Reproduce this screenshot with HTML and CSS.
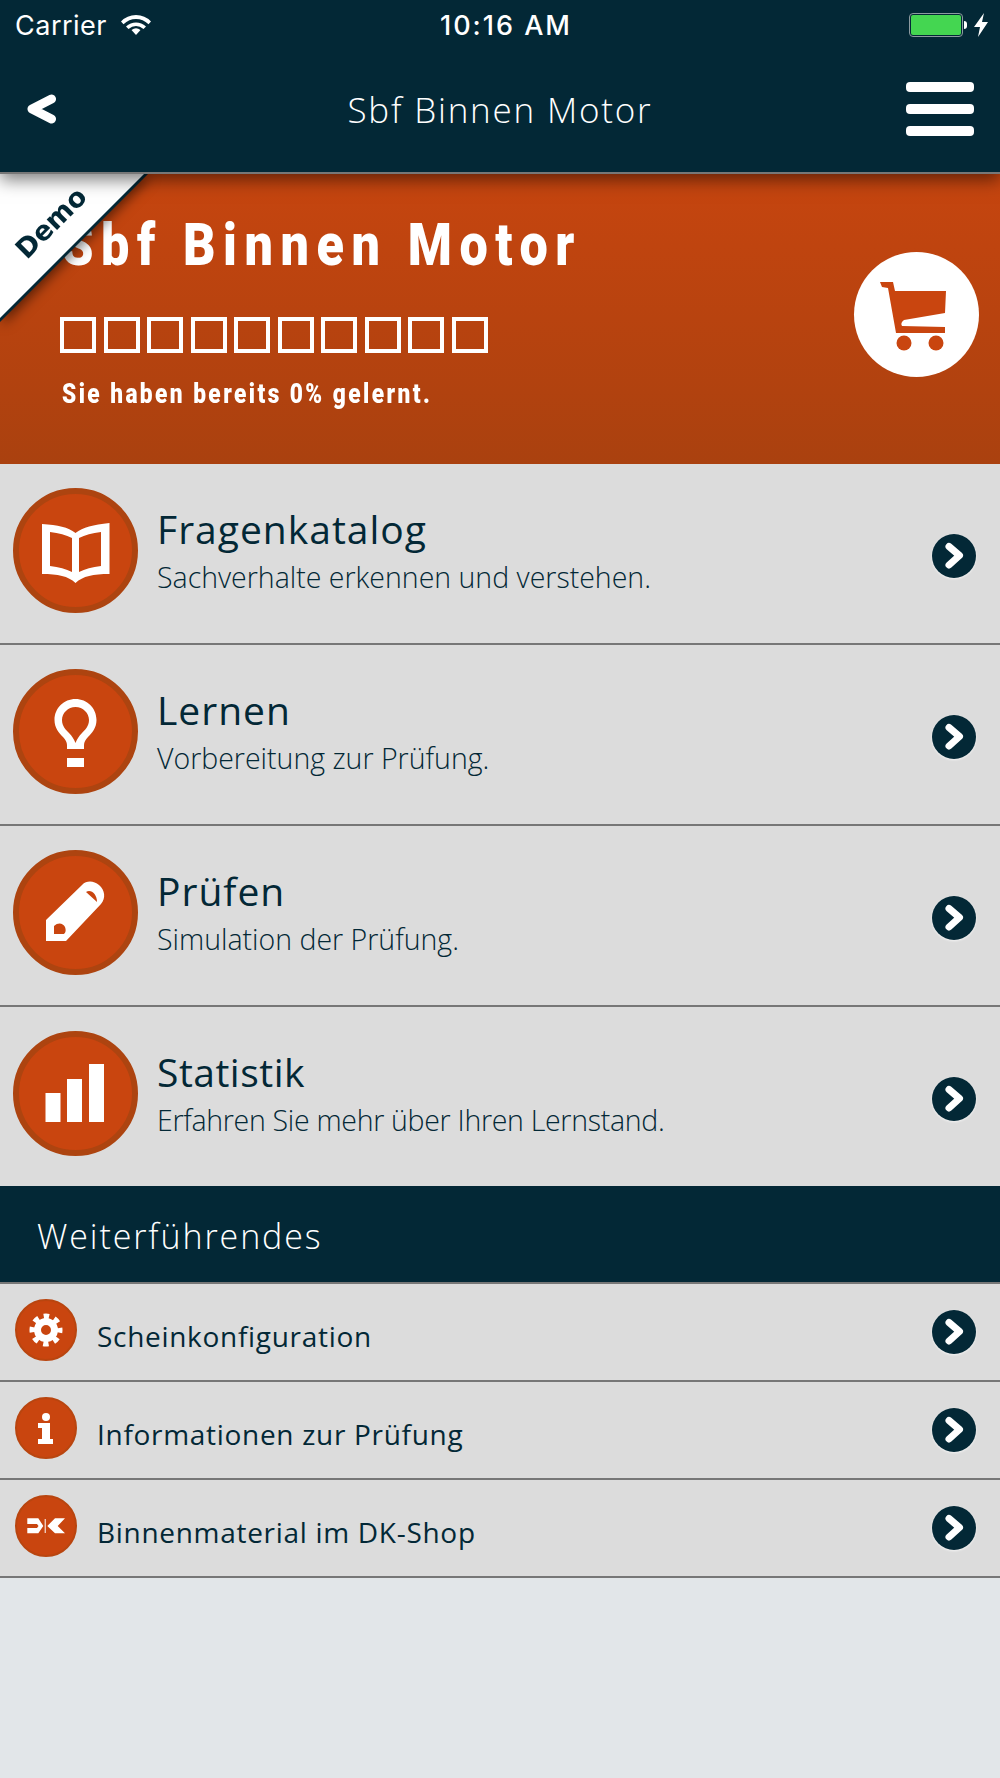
FILE: index.html
```html
<!DOCTYPE html>
<html lang="de">
<head>
  <meta charset="UTF-8" />
  <meta name="viewport" content="width=device-width, initial-scale=1.0" />
  <title>Sbf Binnen Motor</title>
  <link rel="stylesheet" href="styles.css">
</head>
<body>
  <header class="topbar">
    <div class="status">
      <div class="status-left">
        <span class="carrier">Carrier</span>
        <svg class="wifi" viewBox="0 0 30 22"><path d="M15 21 L10.500 16 Q15 12.500 19.500 16 Z"/><path d="M15 1 Q24 1 30 7.500 L27.500 10.200 Q22 5 15 5 Q8 5 2.500 10.200 L0 7.500 Q6 1 15 1 Z"/><path d="M15 8.500 Q20.500 8.500 25 12.500 L22.500 15 Q19 12 15 12 Q11 12 7.500 15 L5 12.500 Q9.500 8.500 15 8.500 Z"/></svg>
      </div>
      <span class="clock">10:16 AM</span>
      <div class="status-right">
        <span class="battery"><span class="battery-fill"></span></span>
        <span class="battery-tip"></span>
        <svg class="bolt" viewBox="0 0 14 24"><path d="M10 0 L0 14 H6 L4 24 L14 9 H8 Z"/></svg>
      </div>
    </div>
    <div class="navbar">
      <svg class="back" viewBox="0 0 32 32"><path d="M25.500 6 L6 16 L25.500 26" /></svg>
      <span class="nav-title">Sbf Binnen Motor</span>
      <div class="burger"><span></span><span></span><span></span></div>
    </div>
  </header>

  <section class="hero">
    <div class="ribbon"><div class="ribbon-edge"></div><span class="ribbon-text">Demo</span></div>
    <div class="hero-text">
      <h1>Sbf Binnen Motor</h1>
      <div class="stars">
        <span></span><span></span><span></span><span></span><span></span>
        <span></span><span></span><span></span><span></span><span></span>
      </div>
      <p>Sie haben bereits 0% gelernt.</p>
    </div>
    <div class="cart">
      <svg viewBox="0 0 125 125">
        <path d="M26 30 H39 L41 39 H92 L91 61 L50 68 Q46 71 48 74 L91 75 V81 H42 L34 36 L28 35 Z"/>
        <circle cx="50" cy="91" r="7.500"/>
        <circle cx="82" cy="91" r="7.500"/>
      </svg>
    </div>
  </section>

  <ul class="menu">
    <li class="menu-row">
      <div class="round">
        <svg viewBox="0 0 125 125"><path fill-rule="evenodd" d="M29 36 C45 37 55 39 62.500 45 C70 39 80 37 96.500 35 V86 C80 86 70 88 62.500 95 C55 88 45 86 29 86 Z M37 44 V78 C46 79 53 81 59 84 V50 C53 47 46 45 37 44 Z M88 44 C79 45 72 47 66 50 V84 C72 81 79 79 88 78 Z"/></svg>
      </div>
      <div class="menu-text">
        <h2>Fragenkatalog</h2>
        <p>Sachverhalte erkennen und verstehen.</p>
      </div>
      <svg class="go" viewBox="0 0 44 44"><circle cx="22" cy="22" r="22"/><path d="M17 12.500 L27.500 21.500 L17 31"/></svg>
    </li>
    <li class="menu-row">
      <div class="round">
        <svg viewBox="0 0 125 125"><path fill-rule="evenodd" d="M62.500 30 C50.900 30 41.500 39 41.500 51 C41.500 59 46 64 50 68 C52.500 71 54 73 54 76 V80 H71 V76 C71 73 72.500 71 75 68 C79 64 83.500 59 83.500 51 C83.500 39 74 30 62.500 30 Z M62.500 38 C55 38 49 44 49 51 C49 57 53 61 56 64 C59 67 61 70 62.500 74 C64 70 66 67 69 64 C72 61 76 57 76 51 C76 44 70 38 62.500 38 Z"/><rect x="54" y="89" width="17" height="9"/></svg>
      </div>
      <div class="menu-text">
        <h2>Lernen</h2>
        <p>Vorbereitung zur Prüfung.</p>
      </div>
      <svg class="go" viewBox="0 0 44 44"><circle cx="22" cy="22" r="22"/><path d="M17 12.500 L27.500 21.500 L17 31"/></svg>
    </li>
    <li class="menu-row">
      <div class="round">
        <svg viewBox="0 0 125 125"><path fill-rule="evenodd" d="M33 91 V70 L69 35 C74 30 81 31 86 35 C92 40 93 48 88 54 L53 91 Z M41 76 C45 72 50 73 52 77 C53 80 53 82 51 84 H41 Z M73 42 C78 39 84 44 84 52 Z"/></svg>
      </div>
      <div class="menu-text">
        <h2>Prüfen</h2>
        <p>Simulation der Prüfung.</p>
      </div>
      <svg class="go" viewBox="0 0 44 44"><circle cx="22" cy="22" r="22"/><path d="M17 12.500 L27.500 21.500 L17 31"/></svg>
    </li>
    <li class="menu-row tight">
      <div class="round">
        <svg viewBox="0 0 125 125"><rect x="32.500" y="62" width="15" height="29"/><rect x="54" y="48" width="15" height="43"/><rect x="76" y="33" width="15" height="58"/></svg>
      </div>
      <div class="menu-text">
        <h2>Statistik</h2>
        <p>Erfahren Sie mehr über Ihren Lernstand.</p>
      </div>
      <svg class="go" viewBox="0 0 44 44"><circle cx="22" cy="22" r="22"/><path d="M17 12.500 L27.500 21.500 L17 31"/></svg>
    </li>
  </ul>

  <h3 class="section-head">Weiterführendes</h3>

  <ul class="submenu">
    <li class="sub-row">
      <div class="round small">
        <svg viewBox="0 0 62 62"><circle class="gear-teeth" cx="31" cy="31" r="13.500"/><circle class="gear-ring" cx="31" cy="31" r="8.500"/></svg>
      </div>
      <span class="sub-label">Scheinkonfiguration</span>
      <svg class="go" viewBox="0 0 44 44"><circle cx="22" cy="22" r="22"/><path d="M17 12.500 L27.500 21.500 L17 31"/></svg>
    </li>
    <li class="sub-row">
      <div class="round small">
        <svg viewBox="0 0 62 62"><circle cx="31" cy="20" r="4"/><rect x="23" y="26" width="12" height="5"/><rect x="27" y="26" width="8" height="21"/><rect x="23" y="42" width="15" height="5"/></svg>
      </div>
      <span class="sub-label">Informationen zur Prüfung</span>
      <svg class="go" viewBox="0 0 44 44"><circle cx="22" cy="22" r="22"/><path d="M17 12.500 L27.500 21.500 L17 31"/></svg>
    </li>
    <li class="sub-row">
      <div class="round small">
        <svg viewBox="0 0 62 62"><path d="M12.300 23.300 H23.300 L28.300 31 L23.300 38.300 H12.300 V33 H22 L23.500 31 L22 29 H12.300 Z"/><rect x="29.700" y="24" width="1" height="14"/><path d="M32.300 31 L40 23.300 H50 L42.700 31 L50 38.300 H40 Z"/></svg>
      </div>
      <span class="sub-label">Binnenmaterial im DK-Shop</span>
      <svg class="go" viewBox="0 0 44 44"><circle cx="22" cy="22" r="22"/><path d="M17 12.500 L27.500 21.500 L17 31"/></svg>
    </li>
  </ul>
</body>
</html>
```

FILE: styles.css
```css
* {
  box-sizing: border-box;
}
body {
  margin: 0;
  min-height: 1778px;
  background: #e2e6e9;
  color: #032836;
  font-family: 'Open Sans', sans-serif;
}
ul {
  list-style: none;
  margin: 0;
  padding: 0;
}

/* top bar */
.topbar {
  position: relative;
  z-index: 3;
  height: 174px;
  background: #032836;
  border-bottom: 2px solid #777;
  box-shadow: 0 6px 16px rgba(0, 0, 0, 0.5);
  color: #fff;
}
.status {
  display: flex;
  align-items: center;
  justify-content: space-between;
  height: 50px;
  padding: 0 12px 0 15px;
  font-size: 27px;
  font-family: 'Inter', sans-serif;
}
.status-left, .status-right {
  display: flex;
  align-items: center;
  width: 170px;
}
.status-right {
  justify-content: flex-end;
}
.carrier {
  font-weight: 400;
  letter-spacing: 0.5px;
}
.wifi {
  width: 30px;
  height: 22px;
  margin-left: 14px;
  fill: #fff;
}
.clock {
  font-weight: 500;
  letter-spacing: 2px;
  margin-left: 9px;
}
.battery {
  width: 54px;
  height: 24px;
  border: 1px solid #8d9aa0;
  border-radius: 4px;
  padding: 1px;
}
.battery-fill {
  display: block;
  height: 100%;
  background: #44d651;
  border-radius: 2px;
}
.battery-tip {
  width: 3px;
  height: 8px;
  margin-left: 1px;
  background: #fff;
  border-radius: 0 3px 3px 0;
}
.bolt {
  width: 14px;
  height: 24px;
  margin-left: 7px;
  fill: #fff;
}
.navbar {
  display: flex;
  align-items: center;
  justify-content: space-between;
  height: 122px;
  padding: 0 26px 4px 26px;
}
.back {
  width: 32px;
  height: 32px;
  fill: none;
  stroke: #fff;
  stroke-width: 9;
  stroke-linecap: round;
  stroke-linejoin: round;
}
.nav-title {
  margin-left: 36px;
  font-size: 35px;
  font-weight: 300;
  letter-spacing: 1.800px;
}
.burger {
  display: flex;
  flex-direction: column;
  gap: 12px;
  width: 68px;
}
.burger span {
  height: 10px;
  background: #fff;
  border-radius: 4px;
}

/* hero */
.hero {
  position: relative;
  display: flex;
  align-items: flex-start;
  justify-content: space-between;
  height: 290px;
  padding: 41px 21px 0 60px;
  background: linear-gradient(#c6450f, #aa410f);
  color: #fff;
  overflow: hidden;
}
.ribbon {
  position: absolute;
  z-index: 2;
  left: 0;
  top: 0;
  width: 148px;
  height: 148px;
  filter: drop-shadow(3px 3px 6px rgba(0, 0, 0, 0.5));
}
.ribbon-edge {
  position: absolute;
  inset: 0;
  background: #032836;
  clip-path: polygon(0 0, 100% 0, 0 100%);
}
.ribbon-edge::after {
  content: "";
  position: absolute;
  left: 0;
  top: 0;
  width: 144px;
  height: 144px;
  background: #fff;
  clip-path: polygon(0 0, 100% 0, 0 100%);
}
.ribbon-text {
  position: absolute;
  left: 8px;
  top: 37px;
  width: 82px;
  text-align: center;
  font-family: 'DejaVu Sans', sans-serif;
  font-weight: 700;
  font-size: 27px;
  line-height: 1;
  color: #032836;
  transform: rotate(-45deg);
}
/* the headline font is a narrow square cut, Roboto squeezed comes closest */
.hero h1 {
  margin: 0 0 0 2px;
  font-family: 'Roboto', sans-serif;
  font-size: 60px;
  font-weight: 900;
  line-height: 60px;
  letter-spacing: 9px;
  white-space: nowrap;
  transform: scaleX(0.84);
  transform-origin: left;
}
.stars {
  display: flex;
  gap: 7.500px;
  margin-top: 42px;
}
.stars span {
  width: 36px;
  height: 36px;
  border: 4px solid #fff;
}
.hero p {
  margin: 24px 0 0 2px;
  font-family: 'Roboto', sans-serif;
  font-size: 28px;
  font-weight: 900;
  letter-spacing: 3px;
  white-space: nowrap;
  transform: scaleX(0.81);
  transform-origin: left;
}
.cart {
  width: 125px;
  height: 125px;
  margin-top: 37px;
  background: #fff;
  border-radius: 50%;
}
.cart svg {
  display: block;
  fill: #c9450f;
}

/* big rows */
.menu-row {
  display: flex;
  align-items: center;
  height: 181px;
  padding: 0 24px 0 13px;
  background: #dcdcdc;
  border-bottom: 2px solid #777;
}
.menu-row:last-child {
  border-bottom: none;
  height: 179px;
}
.round {
  flex: none;
  width: 125px;
  height: 125px;
  margin-top: -6px;
  background: #c9450f;
  border: 6px solid #ad4410;
  border-radius: 50%;
  position: relative;
}
.round svg {
  display: block;
  position: absolute;
  left: -6px;
  top: -6px;
  width: 125px;
  height: 125px;
  fill: #fff;
}
.menu-text {
  flex: 1;
  margin-left: 19px;
  margin-top: -7px;
}
.menu-text h2 {
  margin: 0;
  font-size: 39px;
  font-weight: 400;
  line-height: 46px;
  letter-spacing: 1px;
}
.menu-text p {
  margin: 7px 0 0;
  font-size: 28.500px;
  font-weight: 300;
  line-height: 36px;
}
.tight h2 {
  letter-spacing: 0.5px;
}
.tight p {
  letter-spacing: -0.3px;
}
.go {
  flex: none;
  width: 44px;
  height: 44px;
  margin-top: 5px;
  fill: #032836;
  filter: drop-shadow(0 1px 1px rgba(255, 255, 255, 0.7));
}
.go path {
  fill: none;
  stroke: #fff;
  stroke-width: 7;
  stroke-linecap: round;
  stroke-linejoin: round;
}

/* section head */
.section-head {
  margin: 0;
  height: 98px;
  padding-left: 37px;
  background: #032836;
  border-bottom: 2px solid #777;
  color: #fff;
  font-size: 34px;
  font-weight: 300;
  line-height: 100px;
  letter-spacing: 1.900px;
}

/* small rows */
.sub-row {
  display: flex;
  align-items: center;
  height: 98px;
  padding: 0 24px 0 15px;
  background: #dcdcdc;
  border-bottom: 2px solid #777;
}
.round.small {
  width: 62px;
  height: 62px;
  margin-top: -4px;
  border-width: 2px;
  border-color: #b9450f;
}
.round.small svg {
  left: -2px;
  top: -2px;
  width: 62px;
  height: 62px;
}
.gear-teeth {
  fill: none;
  stroke: #fff;
  stroke-width: 6;
  stroke-dasharray: 5.300 5.300;
  stroke-dashoffset: 2.650;
}
.gear-ring {
  fill: none;
  stroke: #fff;
  stroke-width: 7;
}
.sub-label {
  flex: 1;
  margin-left: 20px;
  margin-top: 8px;
  font-size: 28px;
  letter-spacing: 0.700px;
}
.sub-row .go {
  margin-top: 0;
}
```
